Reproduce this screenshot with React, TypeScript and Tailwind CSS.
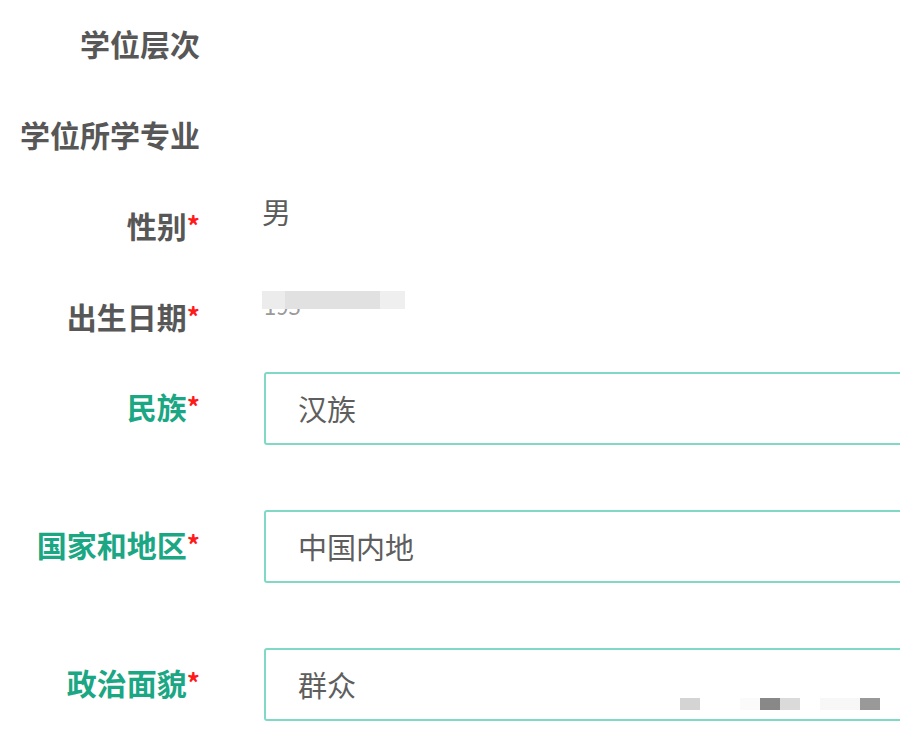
import React from 'react';

const font = { fontFamily: '"Noto Sans CJK SC", "Microsoft YaHei", sans-serif' };

type Row = { label: string; required?: boolean; value?: string; blurred?: boolean };

const plainRows: Row[] = [
  { label: '学位层次' },
  { label: '学位所学专业' },
  { label: '性别', required: true, value: '男' },
  { label: '出生日期', required: true, blurred: true },
];

const inputRows: Row[] = [
  { label: '民族', required: true, value: '汉族' },
  { label: '国家和地区', required: true, value: '中国内地' },
  { label: '政治面貌', required: true, value: '群众' },
];

const Label: React.FC<{ row: Row; green?: boolean }> = ({ row, green }) => (
  <div
    className={`w-[200px] shrink-0 pb-[6px] text-right text-[30px] leading-[32px] font-bold ${
      green ? 'text-[#1ba784]' : 'text-[#575757]'
    }`}
  >
    {row.label}
    {row.required && <span className="text-[#ff1a1a] text-[26px] align-top">*</span>}
  </div>
);

const App: React.FC = () => {
  return (
    <div className="w-[900px] h-[732px] bg-white overflow-hidden" style={font}>
      {/* read-only rows */}
      {plainRows.map((row) => (
        <div key={row.label} className="flex items-center h-[91px]">
          <Label row={row} />
          <div className="ml-[62px] -mt-[34px] text-[29px] leading-[32px] text-[#5c5c5c]">
            {row.value}
            {row.blurred && (
              <div className="relative w-[143px] h-[24px] mt-[2px]">
                <span className="absolute left-[2px] top-[2px] text-[22px] leading-[24px] text-[#9a9a9a]">195</span>
                <div className="absolute inset-0 flex h-[18px]">
                  <div className="w-[23px] bg-[#ececec]" />
                  <div className="w-[95px] bg-[#e1e1e1]" />
                  <div className="w-[25px] bg-[#efefef]" />
                </div>
              </div>
            )}
          </div>
        </div>
      ))}

      {/* editable rows */}
      <div className="mt-[8px] flex flex-col gap-[65px]">
        {inputRows.map((row, i) => (
          <div key={row.label} className="flex items-center">
            <Label row={row} green />
            <div className="relative ml-[64px] flex-1 h-[73px] -mr-[10px] flex items-center border-2 border-[#7fd9c4] rounded-[3px] px-[32px] text-[29px] text-[#5e5e5e]">
              {row.value}
              {i === 2 && (
                <>
                  <div className="absolute left-[414px] top-[48px] w-[20px] h-[12px] bg-[#d4d4d4]" />
                  <div className="absolute left-[474px] top-[48px] w-[20px] h-[12px] bg-[#fafafa]" />
                  <div className="absolute left-[494px] top-[48px] w-[20px] h-[12px] bg-[#888888]" />
                  <div className="absolute left-[514px] top-[48px] w-[20px] h-[12px] bg-[#dadada]" />
                  <div className="absolute left-[554px] top-[48px] w-[40px] h-[12px] bg-[#f7f7f7]" />
                  <div className="absolute left-[594px] top-[48px] w-[20px] h-[12px] bg-[#999999]" />
                </>
              )}
            </div>
          </div>
        ))}
      </div>
    </div>
  );
};

export default App;
